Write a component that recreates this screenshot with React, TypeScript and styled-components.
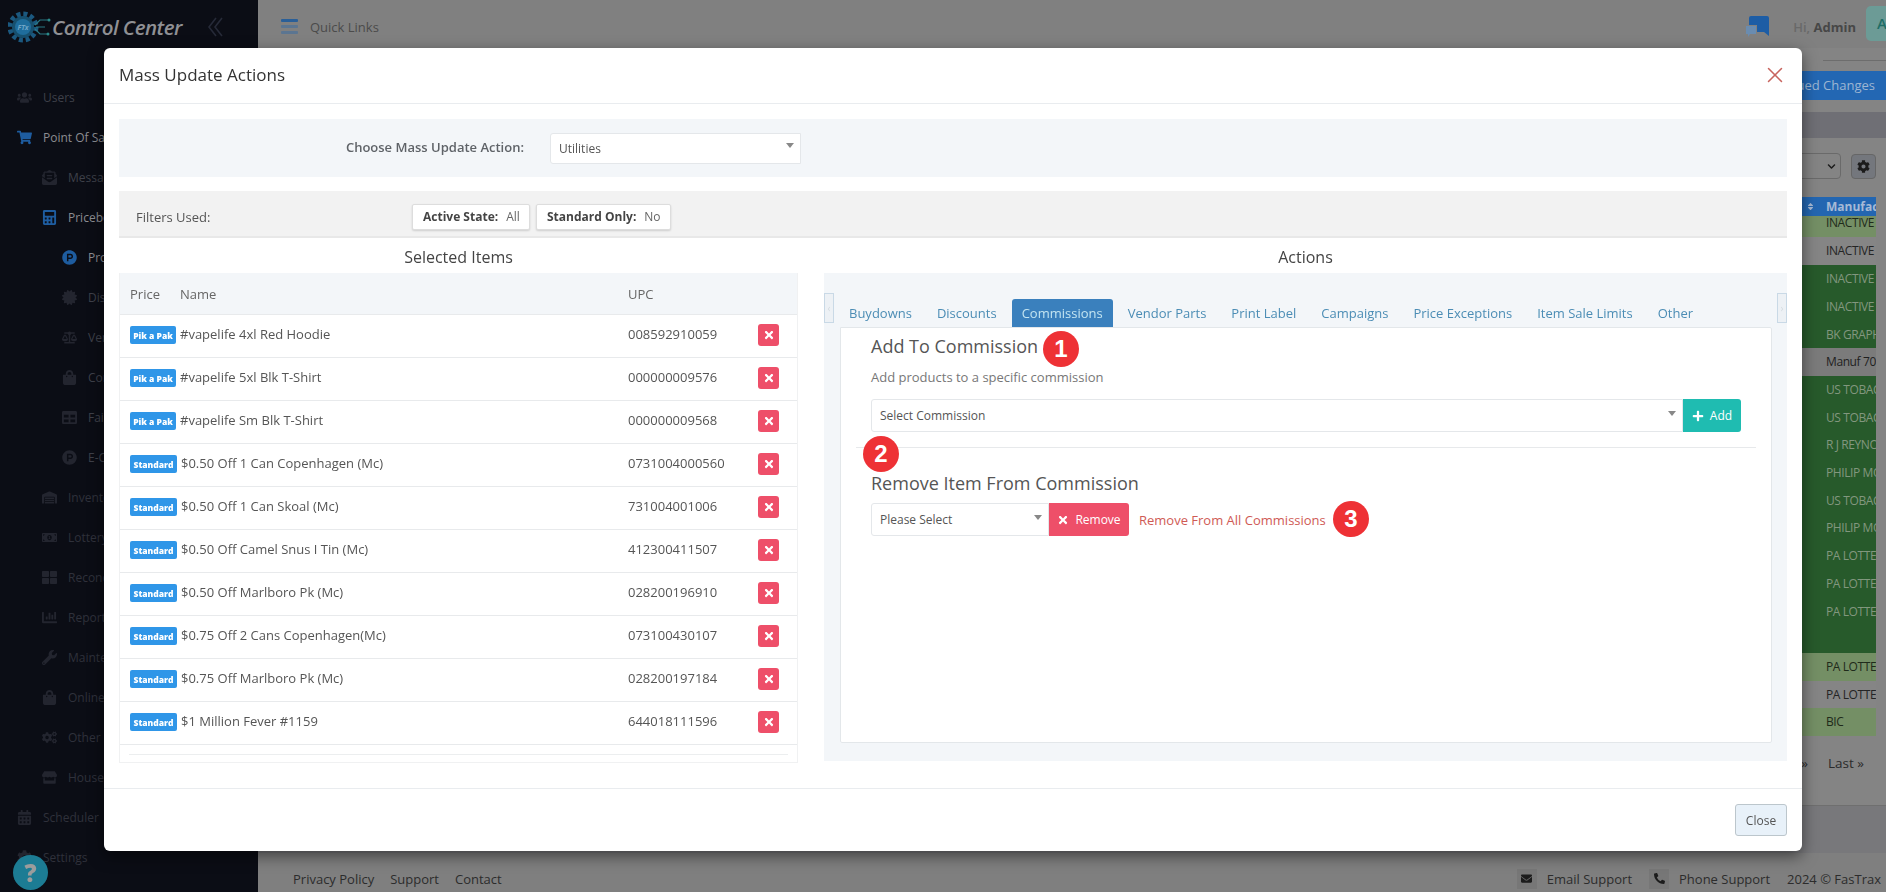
import React from 'react';
import styled, { createGlobalStyle } from 'styled-components';
import { X } from 'lucide-react';
import {
  FaBalanceScale,
  FaCalculator,
  FaCalendarAlt,
  FaCertificate,
  FaChartBar,
  FaChevronDown,
  FaCog,
  FaCogs,
  FaEnvelope,
  FaEnvelopeOpenText,
  FaMoneyBillAlt,
  FaPhoneAlt,
  FaPlus,
  FaProductHunt,
  FaShoppingBag,
  FaShoppingCart,
  FaSort,
  FaStore,
  FaTable,
  FaThLarge,
  FaTimes,
  FaUsers,
  FaWarehouse,
  FaWrench,
} from 'react-icons/fa';

const GlobalStyle = createGlobalStyle`
  html, body, #root {
    margin: 0;
    height: 100%;
  }
  body {
    font-family: "Open Sans", "Liberation Sans", sans-serif;
    font-size: 13px;
    overflow: hidden;
    background: #808080;
  }
  * {
    box-sizing: border-box;
  }
`;

/* the page behind the dialog, painted in its dimmed colours */
const Shell = styled.div`
  display: flex;
  height: 892px;
  overflow: hidden;
`;

const Sidebar = styled.aside`
  width: 258px;
  flex: none;
  background: #0b0d15;
  display: flex;
  flex-direction: column;
`;

const LogoRow = styled.div`
  height: 60px;
  flex: none;
  display: flex;
  align-items: flex-start;
  padding: 9px 0 0 8px;
`;

const LogoText = styled.span`
  font-size: 20.5px;
  font-style: italic;
  font-weight: 600;
  color: #8f9094;
  letter-spacing: -0.5px;
  line-height: 36px;
  margin-left: -2px;
`;

const CollapseGlyph = styled.svg`
  width: 15px;
  height: 22px;
  margin: 7px 0 0 26px;
`;

const Nav = styled.nav`
  padding-top: 17px;
`;

const NavItem = styled.div<{ $level: number; $active?: boolean; $faint?: boolean }>`
  height: 40px;
  display: flex;
  align-items: center;
  white-space: nowrap;
  padding-left: ${({ $level }) => [17, 42, 62][$level]}px;
  color: ${({ $active, $faint }) => ($active ? '#8b8c91' : $faint ? '#2f313b' : '#3e4049')};
  font-size: 12px;
`;

const NavIcon = styled.span<{ $active?: boolean }>`
  width: 26px;
  flex: none;
  display: flex;
  font-size: 15px;
  color: ${({ $active }) => ($active ? '#1e5c9f' : '#23252f')};
`;

const HelpBubble = styled.div`
  position: fixed;
  left: 13px;
  bottom: 2px;
  width: 35px;
  height: 35px;
  border-radius: 50%;
  background: #1c7c94;
  color: #9c9c9c;
  font-size: 24px;
  font-weight: 800;
  display: flex;
  align-items: center;
  justify-content: center;
`;

const Main = styled.div`
  flex: 1;
  min-width: 0;
  display: flex;
  flex-direction: column;
`;

const Topbar = styled.header`
  height: 48px;
  flex: none;
  background: #808080;
  display: flex;
  align-items: center;
  padding: 5px 0 0 23px;
`;

const Hamburger = styled.div`
  width: 17px;
  display: grid;
  gap: 3px;
  margin-right: 12px;
`;

const HamburgerBar = styled.i<{ $top?: boolean }>`
  display: block;
  height: 3px;
  border-radius: 1px;
  background: ${({ $top }) => ($top ? '#2a5f98' : '#5b7591')};
`;

const QuickLinks = styled.span`
  color: #4b4b4b;
  font-size: 13px;
`;

const TopbarRight = styled.div`
  margin-left: auto;
  display: flex;
  align-items: center;
`;

const ChatIcon = styled.svg`
  width: 24px;
  height: 22px;
  margin-right: 24px;
`;

const Greeting = styled.span`
  color: #696969;
  font-size: 13px;
  font-weight: 600;
  white-space: nowrap;
`;

const GreetingName = styled.b`
  color: #474747;
  font-weight: 700;
`;

const Avatar = styled.div`
  width: 30px;
  height: 35px;
  margin: 0 -10px 6px 10px;
  padding: 7px 0 0 11px;
  border-radius: 5px 0 0 5px;
  background: #6c9b96;
  color: #1f6e66;
  font-size: 15px;
  font-weight: 600;
`;

const Content = styled.main`
  flex: 1;
  min-height: 0;
  display: flex;
  flex-direction: column;
  background: #848484;
  align-items: flex-end;
`;

const Rule = styled.div`
  width: 63px;
  height: 1px;
  margin-top: 12px;
  background: #6d6d6d;
`;

const QueuedButton = styled.div`
  width: 200px;
  height: 29px;
  margin-top: 10px;
  padding-right: 11px;
  background: #2367b3;
  color: #9db6d2;
  font-size: 13px;
  line-height: 29px;
  text-align: right;
`;

const Band = styled.div`
  width: 100%;
  height: 26px;
  margin-top: 12px;
  background: #6f6f75;
`;

const ToolRow = styled.div`
  display: flex;
  align-items: center;
  gap: 10px;
  height: 26px;
  margin-top: 15px;
  padding-right: 10px;
`;

const PageSize = styled.div`
  width: 120px;
  height: 26px;
  border: 1px solid #6a6a6a;
  border-radius: 4px;
  padding-right: 4px;
  display: flex;
  align-items: center;
  justify-content: flex-end;
  font-size: 9px;
  color: #1b1b1b;
`;

const GearButton = styled.div`
  width: 25px;
  height: 25px;
  border: 1px solid #666;
  border-radius: 4px;
  background: #74777d;
  display: flex;
  align-items: center;
  justify-content: center;
  font-size: 13px;
  color: #1b1b1b;
`;

const DataTable = styled.div`
  width: 120px;
  margin: 18px 10px 0 0;
  font-size: 12px;
  letter-spacing: -0.4px;
`;

const DataHead = styled.div`
  height: 19px;
  background: #2366b1;
  color: #a6bad6;
  font-size: 12px;
  letter-spacing: 0;
  font-weight: 700;
  display: flex;
  align-items: center;
  justify-content: flex-end;
  overflow: hidden;
`;

const SortIcon = styled.span`
  display: flex;
  font-size: 9px;
  margin-right: 11px;
`;

const DataCell = styled.span`
  width: 50px;
  flex: none;
  overflow: hidden;
  white-space: nowrap;
  line-height: 14px;
`;

const toneColours: Record<string, [string, string]> = {
  light: ['#748f65', '#1f2a1a'],
  plain: ['#858585', '#242424'],
  dark: ['#275a2b', '#82977f'],
  grey: ['#7b7b7b', '#1f1f1f'],
};

const DataRow = styled.div<{ $tone: string; $height: number; $flush?: boolean }>`
  height: ${({ $height }) => $height}px;
  padding-top: ${({ $flush }) => ($flush ? 0 : 7)}px;
  display: flex;
  justify-content: flex-end;
  background: ${({ $tone }) => toneColours[$tone][0]};
  color: ${({ $tone }) => toneColours[$tone][1]};
`;

const Pager = styled.div`
  display: flex;
  gap: 20px;
  margin-top: 18px;
  padding-right: 22px;
  line-height: 18px;
  color: #2b2b2b;
  font-size: 13.5px;
`;

const BottomBand = styled.div`
  width: 100%;
  height: 48px;
  margin-top: auto;
  flex: none;
  background: #78787b;
  border-top: 1px solid #6f6f6f;
`;

const Footer = styled.footer`
  height: 39px;
  flex: none;
  display: flex;
  align-items: center;
  justify-content: space-between;
  padding: 12px 5px 0 35px;
  background: #7f7f7f;
  color: #2c2c2c;
  font-size: 13px;
`;

const FooterLinks = styled.div`
  display: flex;
  gap: 16px;
`;

const FooterRight = styled.div`
  display: flex;
  align-items: center;
`;

const FooterIcon = styled.span`
  width: 20px;
  height: 20px;
  margin-right: 10px;
  display: flex;
  align-items: center;
  justify-content: center;
  background: #777;
  color: #1c1c1c;
  font-size: 11px;
`;

const FooterItem = styled.span`
  margin-right: 17px;
`;

/* dialog */
const Modal = styled.section`
  position: fixed;
  left: 104px;
  top: 48px;
  width: 1698px;
  height: 803px;
  background: #fff;
  border-radius: 6px;
  box-shadow: 0 5px 15px rgba(0, 0, 0, 0.5);
  display: flex;
  flex-direction: column;
  color: #555;
`;

const ModalHeader = styled.div`
  height: 56px;
  flex: none;
  display: flex;
  align-items: center;
  justify-content: space-between;
  padding: 0 14px 2px 15px;
  border-bottom: 1px solid #e9ecef;
`;

const ModalTitle = styled.h2`
  margin: 0;
  font-size: 17px;
  font-weight: 400;
  color: #333;
`;

const CloseIcon = styled(X)`
  color: #c8645e;
`;

const ModalBody = styled.div`
  flex: 1;
  min-height: 0;
  padding: 15px 15px 0;
`;

const ActionPanel = styled.div`
  height: 58px;
  display: grid;
  grid-template-columns: 405px 251px;
  column-gap: 26px;
  align-items: center;
  background: #f3f6f9;
`;

const ActionLabel = styled.label`
  text-align: right;
  font-size: 13px;
  font-weight: 600;
  color: #5f6368;
  padding-bottom: 2px;
`;

const SelectBox = styled.div<{ $width?: string; $joined?: boolean }>`
  height: ${({ $joined }) => ($joined ? 33 : 31)}px;
  width: ${({ $width }) => $width || '100%'};
  flex: ${({ $width }) => ($width ? 'none' : 1)};
  padding: 0 6px 0 8px;
  display: flex;
  align-items: center;
  justify-content: space-between;
  background: #fff;
  border: 1px solid #e4e7ea;
  border-radius: 3px 0 0 3px;
  font-size: 12px;
  color: #555;
`;

const Caret = styled.i`
  width: 0;
  height: 0;
  margin-bottom: 5px;
  border-left: 4px solid transparent;
  border-right: 4px solid transparent;
  border-top: 5px solid #888;
`;

const FiltersPanel = styled.div`
  height: 47px;
  margin-top: 14px;
  padding: 6px 0 0 17px;
  display: flex;
  align-items: center;
  background: #f2f2f2;
  border-bottom: 2px solid #e8e8e8;
`;

const FiltersLabel = styled.span`
  width: 276px;
  flex: none;
  font-size: 13px;
  color: #555;
`;

const FilterChip = styled.div<{ $width: number }>`
  width: ${({ $width }) => $width}px;
  height: 26px;
  margin-right: 6px;
  padding-left: 10px;
  display: flex;
  align-items: center;
  background: #fff;
  border: 1px solid #ddd;
  border-radius: 2px;
  box-shadow: 0 1px 2px rgba(0, 0, 0, 0.15);
  font-size: 12px;
  color: #666;
  white-space: nowrap;
`;

const FilterName = styled.b`
  color: #444;
  font-weight: 700;
  margin-right: 8px;
`;

const Columns = styled.div`
  display: grid;
  grid-template-columns: 679px 963px;
  grid-template-rows: 35px 490px;
  column-gap: 26px;
`;

const ColumnTitle = styled.h3`
  margin: 2px 0 0;
  align-self: center;
  text-align: center;
  font-size: 16px;
  font-weight: 400;
  color: #444;
`;

const ItemsTable = styled.div`
  border: 1px solid #f0f1f2;
  border-top: 0;
  font-size: 13px;
`;

const ItemsHead = styled.div`
  height: 42px;
  display: grid;
  grid-template-columns: 498px 130px 1fr;
  align-items: center;
  padding: 0 10px;
  background: #f3f6f9;
  border-bottom: 1px solid #e8eaec;
  color: #666;
`;

const HeadNames = styled.div`
  display: flex;
  gap: 20px;
`;

const ItemRow = styled.div`
  height: 43px;
  display: grid;
  grid-template-columns: 498px 130px 1fr;
  align-items: center;
  padding: 0 10px 2px;
  border-bottom: 1px solid #e8eaec;
  color: #555;
`;

const ItemName = styled.div`
  display: flex;
  align-items: center;
  gap: 4px;
  white-space: nowrap;
`;

const ItemText = styled.span`
  padding-bottom: 2px;
`;

const PriceChip = styled.span<{ $wide?: boolean }>`
  width: ${({ $wide }) => ($wide ? 47 : 46)}px;
  height: 18px;
  flex: none;
  display: flex;
  align-items: center;
  justify-content: center;
  background: #2f96e8;
  border-radius: 2px;
  color: #fff;
  font-size: 8.5px;
  font-weight: 800;
`;

const DeleteButton = styled.button`
  width: 21px;
  height: 22px;
  padding: 0;
  border: 0;
  border-radius: 3px;
  display: flex;
  align-items: center;
  justify-content: center;
  background: #ee4f69;
  color: #fff;
  font-size: 12px;
`;

const ScrollEnd = styled.div`
  height: 1px;
  margin: 9px 9px 0;
  background: #eceeef;
`;

const ActionsPanel = styled.div`
  height: 488px;
  padding-top: 20px;
  display: flex;
  flex-direction: column;
  background: #f3f6f9;
`;

const TabScroller = styled.div`
  height: 34px;
  flex: none;
  display: flex;
  justify-content: space-between;
`;

const ScrollArrow = styled.span`
  width: 10px;
  height: 30px;
  display: flex;
  align-items: center;
  justify-content: center;
  background: #edf1f5;
  border: 1px solid #c9d9e6;
  color: #d5dbe0;
  font-size: 10px;
`;

const Tabs = styled.div`
  flex: 1;
  align-self: flex-end;
  display: flex;
  gap: 5px;
  padding-left: 5px;
`;

const Tab = styled.div<{ $active?: boolean }>`
  height: 28px;
  padding: 0 10px;
  display: flex;
  align-items: center;
  border-radius: 3px 3px 0 0;
  background: ${({ $active }) => ($active ? '#3a80bd' : 'transparent')};
  color: ${({ $active }) => ($active ? '#c3e4f1' : '#4c8db5')};
  font-size: 13px;
  white-space: nowrap;
`;

const TabPane = styled.div`
  position: relative;
  height: 416px;
  margin: 0 15px 0 16px;
  padding: 0 15px;
  background: #fff;
  border: 1px solid #e3e7ea;
  border-radius: 0 2px 2px 2px;
`;

const PaneSection = styled.div`
  padding: 0 15px;
`;

const SectionTitle = styled.h4<{ $top: number }>`
  margin: ${({ $top }) => $top}px 0 0;
  font-size: 18px;
  line-height: 24px;
  font-weight: 400;
  color: #555;
`;

const SectionHint = styled.p`
  margin: 10px 0 13px;
  line-height: 18px;
  font-size: 13px;
  color: #777;
`;

const Divider = styled.hr`
  height: 1px;
  margin: 15px 0 0;
  border: 0;
  background: #e7e9eb;
`;

const ControlRow = styled.div<{ $top?: number }>`
  display: flex;
  align-items: center;
  margin-top: ${({ $top }) => $top || 0}px;
`;

const FillButton = styled.button<{ $tone: 'teal' | 'red'; $width: number }>`
  width: ${({ $width }) => $width}px;
  height: 33px;
  flex: none;
  padding: 0;
  border: 0;
  border-radius: 0 3px 3px 0;
  display: flex;
  align-items: center;
  justify-content: center;
  gap: 6px;
  background: ${({ $tone }) => ($tone === 'teal' ? '#1fbcb1' : '#ee4f69')};
  color: #fff;
  font-family: inherit;
  font-size: 12px;
`;

const RemoveAllLink = styled.a`
  margin-left: 10px;
  color: #cf5a55;
  font-size: 13px;
`;

const StepBadge = styled.span<{ $x: number; $y: number }>`
  position: absolute;
  left: ${({ $x }) => $x}px;
  top: ${({ $y }) => $y}px;
  width: 36px;
  height: 36px;
  border-radius: 50%;
  display: flex;
  align-items: center;
  justify-content: center;
  background: #ee3135;
  color: #fff;
  font-family: "Liberation Sans", Arial, sans-serif;
  font-size: 24px;
  font-weight: 700;
`;

const ModalFooter = styled.div`
  height: 63px;
  flex: none;
  padding: 15px 15px 0;
  display: flex;
  justify-content: flex-end;
  border-top: 1px solid #e9ecef;
`;

const CloseButton = styled.button`
  width: 52px;
  height: 32px;
  padding: 0;
  background: #e8f1f9;
  border: 1px solid #bcc6cc;
  border-radius: 3px;
  color: #555;
  font-family: inherit;
  font-size: 12px;
`;

const navItems = [
  { label: 'Users', level: 0, icon: FaUsers },
  { label: 'Point Of Sale', level: 0, icon: FaShoppingCart, active: true },
  { label: 'Messages', level: 1, icon: FaEnvelopeOpenText },
  { label: 'Pricebook', level: 1, icon: FaCalculator, active: true },
  { label: 'Products', level: 2, icon: FaProductHunt, active: true },
  { label: 'Discounts', level: 2, icon: FaCertificate },
  { label: 'Vendors', level: 2, icon: FaBalanceScale },
  { label: 'Commissions', level: 2, icon: FaShoppingBag },
  { label: 'Fair Pricing', level: 2, icon: FaTable },
  { label: 'E-Commerce', level: 2, icon: FaProductHunt },
  { label: 'Inventory', level: 1, icon: FaWarehouse, faint: true },
  { label: 'Lottery', level: 1, icon: FaMoneyBillAlt, faint: true },
  { label: 'Reconcile', level: 1, icon: FaThLarge, faint: true },
  { label: 'Reports', level: 1, icon: FaChartBar, faint: true },
  { label: 'Maintenance', level: 1, icon: FaWrench, faint: true },
  { label: 'Online', level: 1, icon: FaShoppingBag, faint: true },
  { label: 'Other', level: 1, icon: FaCogs, faint: true },
  { label: 'House', level: 1, icon: FaStore, faint: true },
  { label: 'Scheduler', level: 0, icon: FaCalendarAlt, faint: true },
  { label: 'Settings', level: 0, icon: FaCog, faint: true },
];

const dataRows = [
  { text: 'INACTIVE', tone: 'light', height: 21, flush: true },
  { text: 'INACTIVE', tone: 'plain', height: 28 },
  { text: 'INACTIVE', tone: 'dark', height: 28 },
  { text: 'INACTIVE', tone: 'dark', height: 27.5 },
  { text: 'BK GRAPHICS', tone: 'dark', height: 27.5 },
  { text: 'Manuf 7001', tone: 'grey', height: 28 },
  { text: 'US TOBACCO', tone: 'dark', height: 27.5 },
  { text: 'US TOBACCO', tone: 'dark', height: 27.5 },
  { text: 'R J REYNOLDS', tone: 'dark', height: 28 },
  { text: 'PHILIP MORRIS', tone: 'dark', height: 27.5 },
  { text: 'US TOBACCO', tone: 'dark', height: 27.5 },
  { text: 'PHILIP MORRIS', tone: 'dark', height: 28 },
  { text: 'PA LOTTERY', tone: 'dark', height: 28 },
  { text: 'PA LOTTERY', tone: 'dark', height: 27.5 },
  { text: 'PA LOTTERY', tone: 'dark', height: 55.5 },
  { text: 'PA LOTTERY', tone: 'light', height: 27.5 },
  { text: 'PA LOTTERY', tone: 'plain', height: 27.5 },
  { text: 'BIC', tone: 'light', height: 28 },
];

const selectedItems = [
  { chip: 'Pik a Pak', name: '#vapelife 4xl Red Hoodie', upc: '008592910059' },
  { chip: 'Pik a Pak', name: '#vapelife 5xl Blk T-Shirt', upc: '000000009576' },
  { chip: 'Pik a Pak', name: '#vapelife Sm Blk T-Shirt', upc: '000000009568' },
  { chip: 'Standard', name: '$0.50 Off 1 Can Copenhagen (Mc)', upc: '0731004000560' },
  { chip: 'Standard', name: '$0.50 Off 1 Can Skoal (Mc)', upc: '731004001006' },
  { chip: 'Standard', name: '$0.50 Off Camel Snus I Tin (Mc)', upc: '412300411507' },
  { chip: 'Standard', name: '$0.50 Off Marlboro Pk (Mc)', upc: '028200196910' },
  { chip: 'Standard', name: '$0.75 Off 2 Cans Copenhagen(Mc)', upc: '073100430107' },
  { chip: 'Standard', name: '$0.75 Off Marlboro Pk (Mc)', upc: '028200197184' },
  { chip: 'Standard', name: '$1 Million Fever #1159', upc: '644018111596' },
];

const tabs = [
  'Buydowns',
  'Discounts',
  'Commissions',
  'Vendor Parts',
  'Print Label',
  'Campaigns',
  'Price Exceptions',
  'Item Sale Limits',
  'Other',
];

function LogoMark() {
  return (
    <svg width="46" height="36" viewBox="0 0 46 36">
      <circle cx="15" cy="18" r="13" fill="none" stroke="#1b587f" strokeWidth="5" strokeDasharray="4 2.8" />
      <circle cx="15" cy="18" r="11" fill="#17506f" />
      <circle cx="15" cy="18" r="8" fill="#1f6d9c" />
      <text x="15" y="21" textAnchor="middle" fontSize="7" fontStyle="italic" fontWeight="700" fill="#6fa6c8">
        FTx
      </text>
      <path d="M27 16l5-5h8M27 20l5 5h7M28 18h9" fill="none" stroke="#2a7a86" strokeWidth="1.2" />
      <circle cx="41" cy="11" r="1.5" fill="#2a8a8a" />
      <circle cx="40" cy="25" r="1.5" fill="#2a8a8a" />
    </svg>
  );
}

export default function App() {
  return (
    <>
      <GlobalStyle />
      <Shell>
        <Sidebar>
          <LogoRow>
            <LogoMark />
            <LogoText>Control Center</LogoText>
            <CollapseGlyph viewBox="0 0 15 22">
              <path d="M8 2l-7 9 7 9M14 2l-7 9 7 9" fill="none" stroke="#262a38" strokeWidth="1.6" />
            </CollapseGlyph>
          </LogoRow>
          <Nav>
            {navItems.map((item) => (
              <NavItem key={item.label} $level={item.level} $active={item.active} $faint={item.faint}>
                <NavIcon $active={item.active}>
                  <item.icon />
                </NavIcon>
                {item.label}
              </NavItem>
            ))}
          </Nav>
        </Sidebar>
        <Main>
          <Topbar>
            <Hamburger>
              <HamburgerBar $top />
              <HamburgerBar />
              <HamburgerBar />
            </Hamburger>
            <QuickLinks>Quick Links</QuickLinks>
            <TopbarRight>
              <ChatIcon viewBox="0 0 24 22">
                <path d="M6 0h16a2 2 0 0 1 2 2v18l-5-4H12V9H4V2a2 2 0 0 1 2-2z" fill="#1d5da5" />
                <path d="M1 10h10v8H5l-2 3v-3H1z" fill="#6a8cb0" />
              </ChatIcon>
              <Greeting>
                Hi, <GreetingName>Admin</GreetingName>
              </Greeting>
              <Avatar>A</Avatar>
            </TopbarRight>
          </Topbar>
          <Content>
            <Rule />
            <QueuedButton>Queued Changes</QueuedButton>
            <Band />
            <ToolRow>
              <PageSize>
                <FaChevronDown />
              </PageSize>
              <GearButton>
                <FaCog />
              </GearButton>
            </ToolRow>
            <DataTable>
              <DataHead>
                <SortIcon>
                  <FaSort />
                </SortIcon>
                <DataCell>Manufacturer</DataCell>
              </DataHead>
              {dataRows.map((row, index) => (
                <DataRow key={index} $tone={row.tone} $height={row.height} $flush={row.flush}>
                  <DataCell>{row.text}</DataCell>
                </DataRow>
              ))}
            </DataTable>
            <Pager>
              <span>Next »</span>
              <span>Last »</span>
            </Pager>
            <BottomBand />
          </Content>
          <Footer>
            <FooterLinks>
              <span>Privacy Policy</span>
              <span>Support</span>
              <span>Contact</span>
            </FooterLinks>
            <FooterRight>
              <FooterIcon>
                <FaEnvelope />
              </FooterIcon>
              <FooterItem>Email Support</FooterItem>
              <FooterIcon>
                <FaPhoneAlt />
              </FooterIcon>
              <FooterItem>Phone Support</FooterItem>
              <span>2024 © FasTrax</span>
            </FooterRight>
          </Footer>
        </Main>
      </Shell>
      <HelpBubble>?</HelpBubble>

      <Modal>
        <ModalHeader>
          <ModalTitle>Mass Update Actions</ModalTitle>
          <CloseIcon size={26} strokeWidth={1.4} />
        </ModalHeader>
        <ModalBody>
          <ActionPanel>
            <ActionLabel>Choose Mass Update Action:</ActionLabel>
            <SelectBox>
              Utilities
              <Caret />
            </SelectBox>
          </ActionPanel>
          <FiltersPanel>
            <FiltersLabel>Filters Used:</FiltersLabel>
            <FilterChip $width={118}>
              <FilterName>Active State:</FilterName> All
            </FilterChip>
            <FilterChip $width={135}>
              <FilterName>Standard Only:</FilterName> No
            </FilterChip>
          </FiltersPanel>
          <Columns>
            <ColumnTitle>Selected Items</ColumnTitle>
            <ColumnTitle>Actions</ColumnTitle>
            <ItemsTable>
              <ItemsHead>
                <HeadNames>
                  <span>Price</span>
                  <span>Name</span>
                </HeadNames>
                <span>UPC</span>
              </ItemsHead>
              {selectedItems.map((item) => (
                <ItemRow key={item.upc}>
                  <ItemName>
                    <PriceChip $wide={item.chip === 'Standard'}>{item.chip}</PriceChip>
                    <ItemText>{item.name}</ItemText>
                  </ItemName>
                  <ItemText>{item.upc}</ItemText>
                  <DeleteButton aria-label="Remove">
                    <FaTimes />
                  </DeleteButton>
                </ItemRow>
              ))}
              <ScrollEnd />
            </ItemsTable>
            <ActionsPanel>
              <TabScroller>
                <ScrollArrow>‹</ScrollArrow>
                <Tabs>
                  {tabs.map((tab) => (
                    <Tab key={tab} $active={tab === 'Commissions'}>
                      {tab}
                    </Tab>
                  ))}
                </Tabs>
                <ScrollArrow>›</ScrollArrow>
              </TabScroller>
              <TabPane>
                <PaneSection>
                  <SectionTitle $top={6}>Add To Commission</SectionTitle>
                  <SectionHint>Add products to a specific commission</SectionHint>
                  <ControlRow>
                    <SelectBox $joined>
                      Select Commission
                      <Caret />
                    </SelectBox>
                    <FillButton $tone="teal" $width={58}>
                      <FaPlus />
                      Add
                    </FillButton>
                  </ControlRow>
                </PaneSection>
                <Divider />
                <PaneSection>
                  <SectionTitle $top={23}>Remove Item From Commission</SectionTitle>
                  <ControlRow $top={8}>
                    <SelectBox $joined $width="178px">
                      Please Select
                      <Caret />
                    </SelectBox>
                    <FillButton $tone="red" $width={80}>
                      <FaTimes />
                      Remove
                    </FillButton>
                    <RemoveAllLink>Remove From All Commissions</RemoveAllLink>
                  </ControlRow>
                </PaneSection>
                <StepBadge $x={202} $y={3}>1</StepBadge>
                <StepBadge $x={22} $y={108}>2</StepBadge>
                <StepBadge $x={492} $y={173}>3</StepBadge>
              </TabPane>
            </ActionsPanel>
          </Columns>
        </ModalBody>
        <ModalFooter>
          <CloseButton>Close</CloseButton>
        </ModalFooter>
      </Modal>
    </>
  );
}
